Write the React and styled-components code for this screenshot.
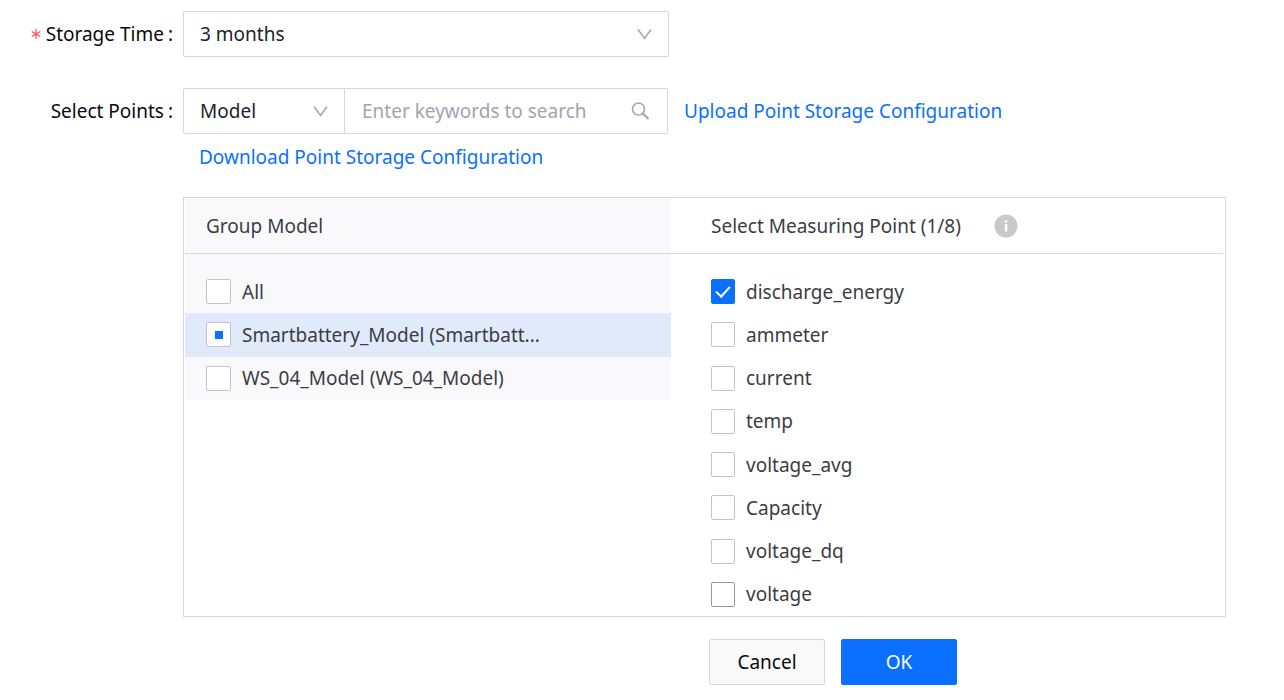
import React, { useState } from "react";
import styled, { createGlobalStyle } from "styled-components";

const color = {
  primary: "#0b70ff",
  border: "#d6d6df",
  icon: "#a6a6b5",
  text: "#3c3c44",
};

const GlobalStyle = createGlobalStyle`
  *, *::before, *::after { box-sizing: border-box; }
  body {
    margin: 0;
    background: #fff;
    color: #0a0a0a;
    font: 19px/28px "Noto Sans", "Open Sans", sans-serif;
  }
  button, input, select { font: inherit; }
`;

const Form = styled.form`
  padding: 11px 58px 15px 0;
`;

const Field = styled.div`
  display: grid;
  grid-template-columns: 183px minmax(0, 1fr);
  margin-bottom: ${(p) => p.$gap}px;
`;

const FieldLabel = styled.label`
  display: flex;
  justify-content: flex-end;
  align-items: center;
  gap: 4px;
  height: 46px;
  padding-right: 10px;
`;

const Required = styled.svg`
  width: 10px;
  height: 10px;
  margin-right: 1px;
  fill: none;
  stroke: #ff4d4f;
`;

const SelectBox = styled.div`
  display: grid;
  align-items: center;
  width: 100%;
  max-width: ${(p) => p.$width}px;
  height: 46px;

  > * { grid-area: 1 / 1; }
`;

const Select = styled.select`
  appearance: none;
  width: 100%;
  height: 46px;
  padding: 0 40px 0 16px;
  border: 1px solid ${color.border};
  border-radius: ${(p) => (p.$joined ? "2px 0 0 2px" : "2px")};
  background: #fff;
  color: #22222a;
`;

const LineIcon = styled.svg`
  justify-self: end;
  width: ${(p) => p.$size}px;
  height: ${(p) => p.$size}px;
  margin-right: 17px;
  fill: none;
  stroke: ${color.icon};
  pointer-events: none;
`;

const Points = styled.div`
  display: flex;
  flex-wrap: wrap;
  align-items: center;
`;

const SearchGroup = styled.div`
  display: flex;
  width: 100%;
  max-width: 485px;
`;

const SearchBox = styled.div`
  display: grid;
  flex: 1;
  align-items: center;
  height: 46px;
  border: 1px solid ${color.border};
  border-left: 0;
  border-radius: 0 2px 2px 0;

  > * { grid-area: 1 / 1; }
`;

const SearchInput = styled.input`
  width: 100%;
  height: 44px;
  padding: 0 44px 0 17px;
  border: 0;
  background: transparent;
  color: #22222a;
  outline-offset: -1px;

  &::placeholder { color: #a3a3b2; opacity: 1; }
`;

const Link = styled.a`
  margin-left: 16px;
  color: ${color.primary};
  line-height: 46px;
  text-decoration: none;
`;

const Panel = styled.section`
  display: grid;
  grid-template-columns: minmax(0, 486px) minmax(0, 1fr);
  margin: 0 0 22px 183px;
  padding: 1px 2px 0 1px;
  border: 1px solid ${color.border};
`;

const Column = styled.div`
  align-self: start;
  background: ${(p) => (p.$shaded ? "#f9f9fb" : "#fff")};
`;

const ColumnHeader = styled.header`
  display: flex;
  align-items: center;
  gap: 33px;
  height: 55px;
  padding-left: ${(p) => p.$inset}px;
  border-bottom: 1px solid ${color.border};
  color: ${color.text};
`;

const Heading = styled.h2`
  margin: 0;
  font-size: 19px;
  font-weight: 400;
`;

const InfoIcon = styled.svg`
  width: 24px;
  height: 24px;
`;

const List = styled.ul`
  display: grid;
  grid-auto-rows: 1fr;
  min-height: ${(p) => p.$height}px;
  margin: 16px 0 0;
  padding: 0;
  list-style: none;
`;

const Option = styled.li`
  display: flex;
  align-items: center;
  padding-left: ${(p) => p.$inset}px;
  background: ${(p) => (p.$active ? "#e0eafb" : "transparent")};
`;

const OptionLabel = styled.label`
  display: flex;
  align-items: center;
  gap: 11px;
  color: ${color.text};
  white-space: nowrap;
`;

const Checkbox = styled.input`
  appearance: none;
  display: grid;
  place-content: center;
  flex: none;
  width: ${(p) => p.$size}px;
  height: 25px;
  margin: 0;
  border: 1px solid ${(p) => (p.$hovered ? "#9696a6" : "#c3c3d0")};
  border-radius: 2px;
  background: #fff;

  &:checked {
    border-color: ${color.primary};
    background: ${color.primary};
  }
  &:checked::after {
    content: "";
    width: 8px;
    height: 14px;
    margin-bottom: 4px;
    border: solid #fff;
    border-width: 0 2px 2px 0;
    transform: rotate(42deg);
  }
  &:indeterminate::after {
    content: "";
    width: 8px;
    height: 8px;
    background: ${color.primary};
  }
`;

const Footer = styled.footer`
  display: flex;
  gap: 16px;
  padding-left: 709px;
`;

const Button = styled.button`
  width: 116px;
  height: 46px;
  border: 1px solid ${(p) => (p.$primary ? color.primary : color.border)};
  border-radius: 2px;
  background: ${(p) => (p.$primary ? color.primary : "#f9f9fa")};
  color: ${(p) => (p.$primary ? "#fff" : "#0a0a0a")};
`;

const models = [
  { name: "All" },
  { name: "Smartbattery_Model (Smartbatt...", partial: true },
  { name: "WS_04_Model (WS_04_Model)" },
];

const points = [
  "discharge_energy",
  "ammeter",
  "current",
  "temp",
  "voltage_avg",
  "Capacity",
  "voltage_dq",
  "voltage",
];

function Chevron() {
  return (
    <LineIcon $size={15} viewBox="0 0 15 15" strokeWidth="1.6" aria-hidden="true">
      <path d="M1 2.5 L7.5 11.5 L14 2.5" />
    </LineIcon>
  );
}

function ModelOption({ name, partial }) {
  return (
    <Option $inset={21} $active={partial}>
      <OptionLabel>
        <Checkbox
          type="checkbox"
          $size={25}
          ref={(el) => {
            if (el && partial) el.indeterminate = true;
          }}
        />
        {name}
      </OptionLabel>
    </Option>
  );
}

export default function App() {
  const [selected, setSelected] = useState(["discharge_energy"]);
  const toggle = (name) =>
    setSelected((now) =>
      now.includes(name) ? now.filter((n) => n !== name) : [...now, name]
    );

  return (
    <>
      <GlobalStyle />
      <Form onSubmit={(e) => e.preventDefault()}>
        <Field $gap={31}>
          <FieldLabel htmlFor="storage-time">
            <Required viewBox="0 0 10 10" strokeWidth="1.2" aria-hidden="true">
              <path d="M5 0V10M0.7 2.5L9.3 7.5M9.3 2.5L0.7 7.5" />
            </Required>
            <span>Storage Time</span>
            <span>:</span>
          </FieldLabel>
          <SelectBox $width={486}>
            <Select id="storage-time">
              <option>3 months</option>
            </Select>
            <Chevron />
          </SelectBox>
        </Field>

        <Field $gap={17}>
          <FieldLabel htmlFor="point-scope">
            <span>Select Points</span>
            <span>:</span>
          </FieldLabel>
          <Points>
            <SearchGroup>
              <SelectBox $width={162}>
                <Select id="point-scope" $joined>
                  <option>Model</option>
                </Select>
                <Chevron />
              </SelectBox>
              <SearchBox>
                <SearchInput
                  type="text"
                  aria-label="Search points"
                  placeholder="Enter keywords to search"
                />
                <LineIcon $size={20} viewBox="0 0 20 20" aria-hidden="true">
                  <circle cx="8.5" cy="8" r="6" strokeWidth="1.7" />
                  <path d="M12.8 12.4L18.5 18" strokeWidth="2.2" />
                </LineIcon>
              </SearchBox>
            </SearchGroup>
            <Link href="#upload">Upload Point Storage Configuration</Link>
            <Link href="#download">Download Point Storage Configuration</Link>
          </Points>
        </Field>

        <Panel>
          <Column $shaded>
            <ColumnHeader $inset={21}>
              <Heading>Group Model</Heading>
            </ColumnHeader>
            <List $height={130}>
              {models.map((m) => (
                <ModelOption key={m.name} {...m} />
              ))}
            </List>
          </Column>
          <Column>
            <ColumnHeader $inset={40}>
              <Heading>Select Measuring Point ({selected.length}/8)</Heading>
              <InfoIcon viewBox="0 0 24 24" aria-hidden="true">
                <circle cx="12" cy="12" r="11.5" fill="#c9c9c9" />
                <path d="M10.8 6.2h2.5v2.4h-2.5zM10.8 10h2.5v7.4h-2.5z" fill="#fff" />
              </InfoIcon>
            </ColumnHeader>
            <List $height={346}>
              {points.map((name) => (
                <Option key={name} $inset={40}>
                  <OptionLabel>
                    <Checkbox
                      type="checkbox"
                      $size={24}
                      $hovered={name === "voltage"}
                      checked={selected.includes(name)}
                      onChange={() => toggle(name)}
                    />
                    {name}
                  </OptionLabel>
                </Option>
              ))}
            </List>
          </Column>
        </Panel>

        <Footer>
          <Button type="button">Cancel</Button>
          <Button type="submit" $primary>
            OK
          </Button>
        </Footer>
      </Form>
    </>
  );
}
